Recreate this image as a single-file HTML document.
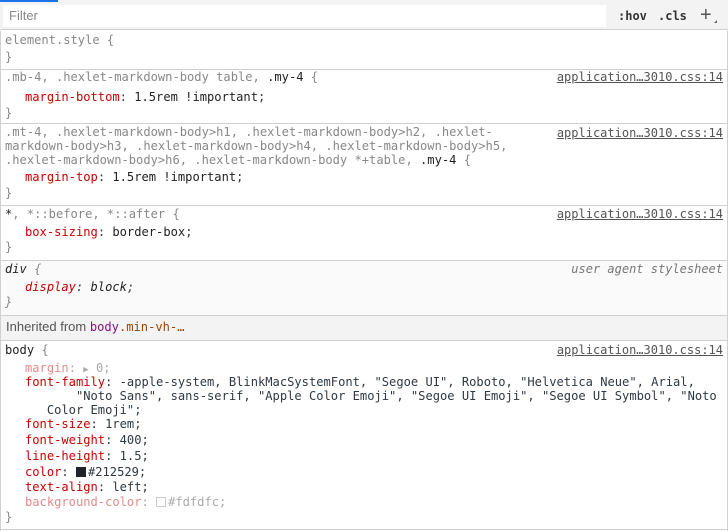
<!DOCTYPE html>
<html><head><meta charset="utf-8"><style>
*{margin:0;padding:0;box-sizing:border-box}
body{width:728px;height:531px;background:#fff;position:relative;overflow:hidden;font-family:"DejaVu Sans Mono","Liberation Mono",monospace;font-size:12.1px;color:#303942}
.l{position:absolute;left:5px;white-space:pre;height:16px;line-height:16px}
.src{position:absolute;right:5px;white-space:pre;line-height:16px;color:#545454;text-decoration:underline;font-size:12px}
.sel{color:#888}
.b{color:#222}
.p{color:#c80000}
.v{color:#222}
.f{color:#e08b8b}
.fv{color:#aaa}
.hr{position:absolute;left:0;width:728px;height:1px;background:#d0d0d0}
.sec{position:absolute;left:0;width:728px}
</style></head><body>
<div style="position:absolute;left:0;top:0;width:728px;height:30px;background:#f3f3f3;border-bottom:1px solid #d0d0d0"></div>
<div style="position:absolute;left:0;top:0;width:58px;height:2px;background:#1a73e8"></div>
<div style="position:absolute;left:3px;top:5px;width:603px;height:22px;background:#fff"></div>
<div style="position:absolute;left:9px;top:7px;font:13px 'Liberation Sans',sans-serif;color:#888;line-height:18px">Filter</div>
<div style="position:absolute;left:618px;top:7px;font-weight:bold;font-size:12px;color:#333;line-height:18px">:hov</div>
<div style="position:absolute;left:658px;top:7px;font-weight:bold;font-size:12px;color:#333;line-height:18px">.cls</div>
<div style="position:absolute;left:700px;top:3px;font:20px 'Liberation Sans',sans-serif;color:#555;line-height:24px">+</div>
<div style="position:absolute;left:714px;top:20px;width:0;height:0;border-left:3px solid transparent;border-bottom:3px solid #666"></div>

<div style="position:absolute;left:0;top:31px;width:1px;height:500px;background:#d0d0d0"></div>
<div style="position:absolute;left:727px;top:31px;width:1px;height:500px;background:#d0d0d0"></div>

<div class="l sel" style="top:32px">element.style {</div>
<div class="l sel" style="top:49px">}</div>
<div class="hr" style="top:69px"></div>

<div class="l sel" style="top:69px">.mb-4, .hexlet-markdown-body table, <span class="b">.my-4</span> {</div>
<div class="src" style="top:69px">application…3010.css:14</div>
<div class="l" style="top:89px;left:25px"><span class="p">margin-bottom</span>: <span class="v">1.5rem !important</span>;</div>
<div class="l sel" style="top:105px">}</div>
<div class="hr" style="top:123px"></div>

<div class="l sel" style="top:125px;line-height:14px">.mt-4, .hexlet-markdown-body&gt;h1, .hexlet-markdown-body&gt;h2, .hexlet-
markdown-body&gt;h3, .hexlet-markdown-body&gt;h4, .hexlet-markdown-body&gt;h5,
.hexlet-markdown-body&gt;h6, .hexlet-markdown-body *+table, <span class="b">.my-4</span> {</div>
<div class="src" style="top:125px">application…3010.css:14</div>
<div class="l" style="top:169px;left:25px"><span class="p">margin-top</span>: <span class="v">1.5rem !important</span>;</div>
<div class="l sel" style="top:185px">}</div>
<div class="hr" style="top:205px"></div>

<div class="l sel" style="top:206px"><span class="b">*</span>, *::before, *::after {</div>
<div class="src" style="top:206px">application…3010.css:14</div>
<div class="l" style="top:224px;left:25px"><span class="p">box-sizing</span>: <span class="v">border-box</span>;</div>
<div class="l sel" style="top:239px">}</div>
<div class="hr" style="top:260px"></div>

<div class="sec" style="top:261px;height:54px;background:#fafafa;border-left:1px solid #d0d0d0;border-right:1px solid #d0d0d0"></div>
<div class="l" style="top:261px;font-style:italic;color:#222">div <span class="sel">{</span></div>
<div class="src" style="top:261px;font-style:italic;text-decoration:none;color:#777">user agent stylesheet</div>
<div class="l" style="top:279px;left:25px;font-style:italic"><span class="p">display</span>: <span class="v">block</span>;</div>
<div class="l sel" style="top:294px;font-style:italic">}</div>
<div class="hr" style="top:315px"></div>

<div class="sec" style="top:316px;height:24px;background:#f3f3f3;border-left:1px solid #d0d0d0;border-right:1px solid #d0d0d0"></div>
<div style="position:absolute;left:6px;top:319px;font:13px 'Liberation Sans',sans-serif;color:#555;line-height:16px">Inherited from <span style="font-family:'DejaVu Sans Mono',monospace;font-size:12.1px;color:#881280">body</span><span style="font-family:'DejaVu Sans Mono',monospace;font-size:12.1px;color:#994500">.min-vh-…</span></div>
<div class="hr" style="top:340px"></div>

<div class="l" style="top:342px;color:#222">body <span class="sel">{</span></div>
<div class="src" style="top:342px">application…3010.css:14</div>
<div class="l" style="top:360px;left:25px"><span class="f">margin</span><span class="fv">: <span style="font-size:9px">▶</span> 0;</span></div>
<div class="l" style="top:375px;left:25px;line-height:14px"><span class="p">font-family</span>: -apple-system, BlinkMacSystemFont, "Segoe UI", Roboto, "Helvetica Neue", Arial,
       "Noto Sans", sans-serif, "Apple Color Emoji", "Segoe UI Emoji", "Segoe UI Symbol", "Noto
   Color Emoji";</div>
<div class="l" style="top:416px;left:25px"><span class="p">font-size</span>: 1rem;</div>
<div class="l" style="top:432px;left:25px"><span class="p">font-weight</span>: 400;</div>
<div class="l" style="top:448px;left:25px"><span class="p">line-height</span>: 1.5;</div>
<div class="l" style="top:464px;left:25px"><span class="p">color</span>: <span style="display:inline-block;width:10px;height:10px;background:#212529;vertical-align:-1px;margin-right:2px"></span>#212529;</div>
<div class="l" style="top:479px;left:25px"><span class="p">text-align</span>: left;</div>
<div class="l" style="top:494px;left:25px"><span class="f">background-color</span><span class="fv">: <span style="display:inline-block;width:10px;height:10px;background:#fdfdfc;border:1px solid #ccc;vertical-align:-1px;margin-right:2px"></span>#fdfdfc;</span></div>
<div class="l sel" style="top:509px">}</div>
<div class="hr" style="top:529px"></div>
</body></html>
